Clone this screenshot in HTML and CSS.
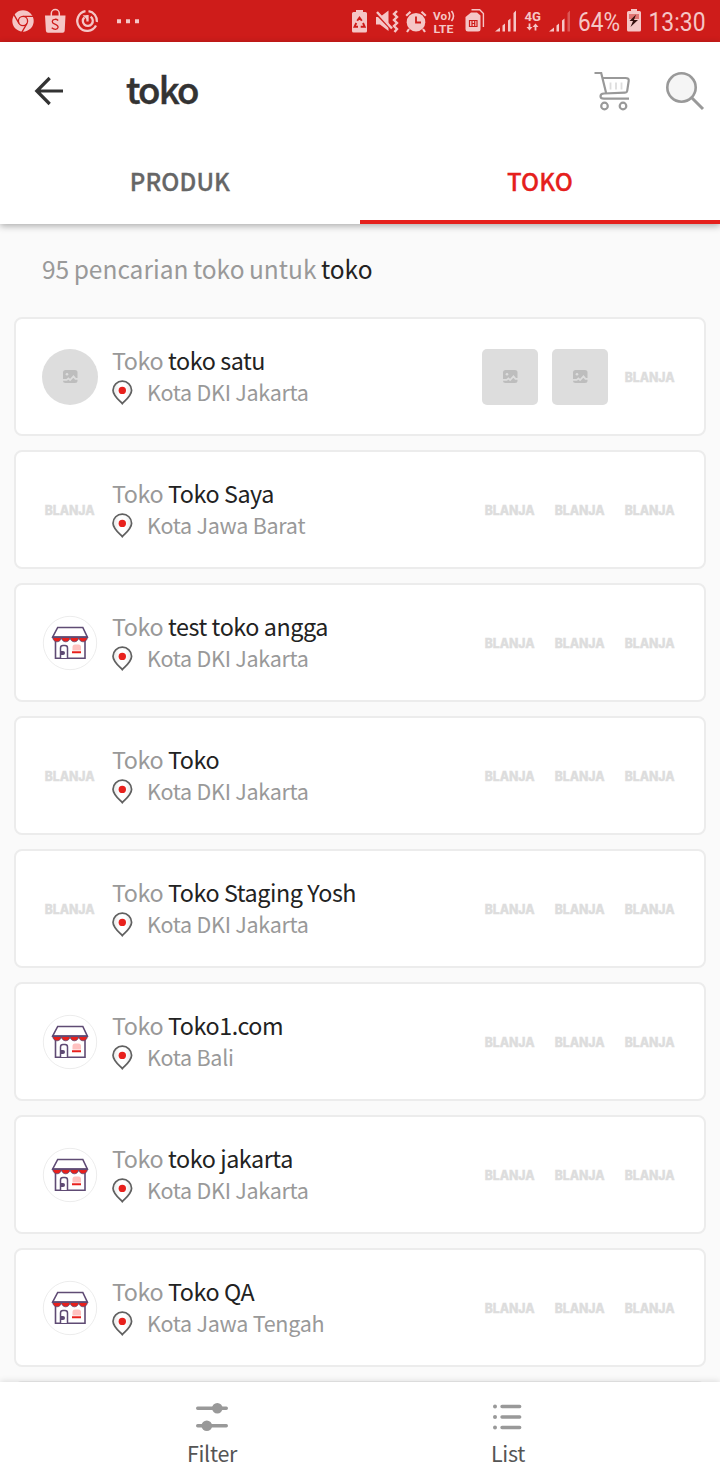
FILE: index.html
```html
<!DOCTYPE html>
<html lang="id">
<head>
<meta charset="utf-8">
<title>toko</title>
<link rel="stylesheet" href="styles.css">
</head>
<body>
<svg class="defs" width="0" height="0" aria-hidden="true">
  <defs>
    <linearGradient id="pinfill" x1="0" x2="1" y1="0" y2="0"><stop offset="0" stop-color="#e6e6e6"/><stop offset=".35" stop-color="#fff"/><stop offset=".65" stop-color="#fff"/><stop offset="1" stop-color="#e6e6e6"/></linearGradient>
    <symbol id="pin" viewBox="0 0 21 25">
      <path d="M10.3 23.6C8 20.9 1 15.800 1 10.200A9.300 9.100 0 0 1 19.600 10.200C19.600 15.800 12.600 20.900 10.300 23.600Z" fill="url(#pinfill)" stroke="#606060" stroke-width="1.700"/>
      <circle cx="10.300" cy="10.400" r="3.700" fill="#e8201c"/>
    </symbol>
    <symbol id="brand" viewBox="0 0 56 56">
      <text x="2.700" y="33" textLength="50" lengthAdjust="spacingAndGlyphs" class="brand-text">BLANJA</text>
    </symbol>
    <symbol id="image" viewBox="0 0 56 56">
      <rect x="21" y="21" width="14.500" height="13" rx="2.500" fill="#bdbdbd"/>
      <circle cx="25" cy="25.300" r="1.300" fill="#ddd"/>
      <path d="M20.500 30.800h4.200l1.700-1.500 1.700 1.700 3.400-3.600 2 2.400h2.500" fill="none" stroke="#ddd" stroke-width="1.700"/>
    </symbol>
    <symbol id="store" viewBox="0 0 56 56">
      <circle cx="28" cy="28" r="26.700" fill="#fff" stroke="#ececec"/>
      <path d="M13.500 24v19.300h29.500V24" fill="#fff" stroke="#5f4b74" stroke-width="1.600"/>
      <path d="M15.700 12.500h25.100l4.500 9.500H10.700z" fill="#fff" stroke="#5f4b74" stroke-width="1.600"/>
      <path d="M10.700 22.300h34.700a4.330 4.500 0 0 1-8.670 0a4.330 4.500 0 0 1-8.680 0a4.330 4.500 0 0 1-8.680 0a4.330 4.500 0 0 1-8.670 0z" fill="#e8201c" stroke="#5f4b74" stroke-width=".8"/>
      <path d="M10 22.300h36" stroke="#5f4b74" stroke-width="1.500"/>
      <path d="M18.500 43V33a2.500 2.500 0 0 1 2.500-2.500h2a2.500 2.500 0 0 1 2.500 2.500v10" fill="#fff" stroke="#5f4b74" stroke-width="1.500"/>
      <path d="M19 36h2a1.800 1.800 0 0 1 0 4h-2z" fill="#5f4b74"/>
      <path d="M30.500 35.500V32a2.500 2.500 0 0 1 2.500-2.500h3.500a2.500 2.500 0 0 1 2.500 2.500v3.500z" fill="#ffc2c0"/>
      <path d="M30 37.300h9" stroke="#e8201c" stroke-width="2"/>
    </symbol>
  </defs>
</svg>
<div class="screen">
  <div class="status">
    <svg width="28" height="42" viewBox="12 0 28 42">
      <circle cx="23" cy="21" r="10.700" class="on"/>
      <g fill="none" stroke="#ce1c1a" stroke-width="1.300"><circle cx="23" cy="21" r="4.600"/><path d="M23 16.400h10M19 23.300l-5.200-9M27 23.300l-5.200 9"/></g>
    </svg>
    <svg width="32" height="42" viewBox="40 0 32 42">
      <path d="M45 15.500h20.500l-.8 15.200q-.1 2-2 2H48q-2 0-2.100-2z" class="on"/>
      <path d="M51.300 16v-2.500a4 4 0 0 1 8 0V16" class="line" stroke-width="1.500"/>
      <path d="M58.200 20.500q-1.500-1.500-3.500-1.200c-3 .3-3.300 3.500-.4 4.600 2.500.9 4.300 1.600 3.700 3.800-.6 2.200-4 2-6.300 0" fill="none" stroke="#ce1c1a" stroke-width="1.300"/>
    </svg>
    <svg width="34" height="42" viewBox="72 0 34 42">
      <g class="line" stroke-width="2.300"><path d="M88.500 11.100A9.900 9.900 0 0 1 96.900 22M96 25.500A9.900 9.900 0 1 1 85.500 11.200"/><path d="M90.600 16.800a5 5 0 1 1-6.200.5M87.500 15v6.500"/></g>
      <path d="M82.700 15.200h4.700V20z" class="on"/>
    </svg>
    <svg width="40" height="42" viewBox="106 0 40 42"><path d="M117 19.200h4v4h-4zM126 19.200h4v4h-4zM135 19.200h4v4h-4z" class="on"/></svg>
    <span class="spacer"></span>
    <svg width="22" height="42" viewBox="350 0 22 42">
      <path d="M356 10h7v2h2.500q1.500 0 1.500 1.500v17.500q0 1.500-1.500 1.500h-12q-1.500 0-1.500-1.500V13.500q0-1.500 1.500-1.500h2.500z" class="on"/>
      <path d="M357.200 20.800l2.300-3.100 2.300 3.100M363 23l1.700 3.700h-4M358 26.700h-3.500l1.800-3.700" fill="none" stroke="#ce1c1a" stroke-width="1.900"/>
    </svg>
    <svg width="30" height="42" viewBox="372 0 30 42">
      <path d="M376 17h4l8.500-6.500v20.500l-8.500-6.500h-4z" class="on"/>
      <path d="M376 13.500l16.500 17" stroke="#ce1c1a" stroke-width="2"/><path d="M377 12l15 16.500" class="line" stroke-width="2.400"/>
      <path d="M397 11l-3 3 3 3-3 3 3 3-3 3 3 3-2.500 3" class="line" stroke-width="2.400"/>
    </svg>
    <svg width="28" height="42" viewBox="402 0 28 42">
      <circle cx="416" cy="22.200" r="9.300" class="on"/><path d="M406.200 15.800l4.300-4M425.800 15.800l-4.300-4M409 29l-2 3M423 29l2 3" class="line" stroke-width="2.200"/><path d="M416 16.500v6h5" fill="none" stroke="#ce1c1a" stroke-width="1.800"/>
    </svg>
    <svg width="30" height="42" viewBox="430 0 30 42">
      <text x="433" y="19.500" class="volte" textLength="14" lengthAdjust="spacingAndGlyphs">Vo</text><path d="M448.500 12q2.500 4 0 8M451.500 11q4 5 0 10" class="line" stroke-width="1.600"/><text x="433.500" y="32.500" class="volte" textLength="20" lengthAdjust="spacingAndGlyphs">LTE</text>
    </svg>
    <svg width="32" height="42" viewBox="460 0 32 42">
      <path d="M471 12.500h6l3.500 3V29q0 2.500-2.500 2.500H468q-2.500 0-2.500-2.500V17z" class="on"/><path d="M471.500 9.800h8.200l3.700 3.700v13.500" class="line" stroke-width="1.400"/><path d="M469.500 20.500h7.500v6h-7.500zM472 20v7M474.700 20v7M472 23.500h3" fill="none" stroke="#ce1c1a" stroke-width="1.200"/>
    </svg>
    <svg width="28" height="42" viewBox="492 0 28 42"><path d="M495 31.500l5-4v4zM502.500 25.500l2.500-2v8h-2.500zM508 20.500l2.500-2v13H508zM513.500 13l2.500-2.500v21h-2.500z" class="on"/></svg>
    <svg width="26" height="42" viewBox="520 0 26 42">
      <text x="524.500" y="20.500" class="tiny" textLength="16.500" lengthAdjust="spacingAndGlyphs">4G</text><path d="M529.500 23.500v4M535.500 30.500v-4" class="line" stroke-width="1.800"/><path d="M526.500 27h6l-3 3.500zM532.500 27h6l-3-3.500z" class="on"/>
    </svg>
    <svg width="28" height="42" viewBox="546 0 28 42"><path d="M549 31.500l5-4v4zM556.500 25.500l2.500-2v8h-2.500zM562 20.500l2.500-2v13H562z" class="on"/><path d="M567.500 13l2.500-2.500v21h-2.500z" class="on" opacity=".35"/></svg>
    <svg width="50" height="42" viewBox="574 0 50 42"><text x="578" y="31" class="clock" textLength="42" lengthAdjust="spacingAndGlyphs">64%</text></svg>
    <svg width="20" height="42" viewBox="624 0 20 42">
      <path d="M631 9h6v2h2.500q1.500 0 1.500 1.500v17.500q0 1.500-1.500 1.500h-11q-1.500 0-1.500-1.500V12.500q0-1.500 1.500-1.500h2.500z" class="on"/><path d="M629 14h10v5h-10z" fill="#e07573"/><path d="M636 14.500l-6.500 6.500h3.500l-2.500 6 7.500-7h-4z" fill="#35100f"/>
    </svg>
    <svg width="62" height="42" viewBox="644 0 62 42"><text x="648.500" y="31" class="clock" textLength="57" lengthAdjust="spacingAndGlyphs">13:30</text></svg>
  </div>

  <header class="top">
    <div class="bar">
      <svg class="back" width="30" height="30" viewBox="0 0 30 30"><path d="M15.700 2L2.800 15l12.900 13M3.500 15H29" fill="none" stroke="#333" stroke-width="3.200"/></svg>
      <h1 class="title">toko</h1>
      <svg class="cart" width="38" height="40" viewBox="0 0 38 40">
        <g fill="none" stroke="#999" stroke-width="2.200"><path d="M.5 2h6.700l4.800 19.500M9.200 7h22.300q3.500 0 3.200 2.800l-1.500 10q-.3 1.800-2.200 1.900L10 22.500q-3.500.2-3.500 2.700 0 2.500 3.500 2.500h25"/><circle cx="10.500" cy="35" r="3.300"/><circle cx="29" cy="35" r="3.300"/></g>
        <path d="M16.500 11.500v7M22 11.500v7M27.500 11.500v7" stroke="#ddd" stroke-width="1.800"/>
      </svg>
      <svg class="search" width="40" height="40" viewBox="0 0 40 40"><circle cx="16.500" cy="16.500" r="14.200" fill="#f5f5f5" stroke="#999" stroke-width="2.600"/><path d="M27 27l11 11" stroke="#999" stroke-width="3"/></svg>
    </div>
    <nav class="tabs"><a class="tab">PRODUK</a><a class="tab active">TOKO</a></nav>
  </header>

  <main class="results">
    <p class="summary">95 pencarian toko untuk <b>toko</b></p>
    <div class="cards">
      <article class="card">
        <div class="avatar blank"><svg><use href="#image"/></svg></div>
        <div class="info"><div class="name">Toko <b>toko satu</b></div><div class="city"><svg class="pin"><use href="#pin"/></svg><span>Kota DKI Jakarta</span></div></div>
        <div class="thumb blank"><svg><use href="#image"/></svg></div><div class="thumb blank"><svg><use href="#image"/></svg></div><div class="thumb"><svg><use href="#brand"/></svg></div>
      </article>
      <article class="card">
        <div class="avatar"><svg><use href="#brand"/></svg></div>
        <div class="info"><div class="name">Toko <b>Toko Saya</b></div><div class="city"><svg class="pin"><use href="#pin"/></svg><span>Kota Jawa Barat</span></div></div>
        <div class="thumb"><svg><use href="#brand"/></svg></div><div class="thumb"><svg><use href="#brand"/></svg></div><div class="thumb"><svg><use href="#brand"/></svg></div>
      </article>
      <article class="card">
        <div class="avatar"><svg><use href="#store"/></svg></div>
        <div class="info"><div class="name">Toko <b>test toko angga</b></div><div class="city"><svg class="pin"><use href="#pin"/></svg><span>Kota DKI Jakarta</span></div></div>
        <div class="thumb"><svg><use href="#brand"/></svg></div><div class="thumb"><svg><use href="#brand"/></svg></div><div class="thumb"><svg><use href="#brand"/></svg></div>
      </article>
      <article class="card">
        <div class="avatar"><svg><use href="#brand"/></svg></div>
        <div class="info"><div class="name">Toko <b>Toko</b></div><div class="city"><svg class="pin"><use href="#pin"/></svg><span>Kota DKI Jakarta</span></div></div>
        <div class="thumb"><svg><use href="#brand"/></svg></div><div class="thumb"><svg><use href="#brand"/></svg></div><div class="thumb"><svg><use href="#brand"/></svg></div>
      </article>
      <article class="card">
        <div class="avatar"><svg><use href="#brand"/></svg></div>
        <div class="info"><div class="name">Toko <b>Toko Staging Yosh</b></div><div class="city"><svg class="pin"><use href="#pin"/></svg><span>Kota DKI Jakarta</span></div></div>
        <div class="thumb"><svg><use href="#brand"/></svg></div><div class="thumb"><svg><use href="#brand"/></svg></div><div class="thumb"><svg><use href="#brand"/></svg></div>
      </article>
      <article class="card">
        <div class="avatar"><svg><use href="#store"/></svg></div>
        <div class="info"><div class="name">Toko <b>Toko1.com</b></div><div class="city"><svg class="pin"><use href="#pin"/></svg><span>Kota Bali</span></div></div>
        <div class="thumb"><svg><use href="#brand"/></svg></div><div class="thumb"><svg><use href="#brand"/></svg></div><div class="thumb"><svg><use href="#brand"/></svg></div>
      </article>
      <article class="card">
        <div class="avatar"><svg><use href="#store"/></svg></div>
        <div class="info"><div class="name">Toko <b>toko jakarta</b></div><div class="city"><svg class="pin"><use href="#pin"/></svg><span>Kota DKI Jakarta</span></div></div>
        <div class="thumb"><svg><use href="#brand"/></svg></div><div class="thumb"><svg><use href="#brand"/></svg></div><div class="thumb"><svg><use href="#brand"/></svg></div>
      </article>
      <article class="card">
        <div class="avatar"><svg><use href="#store"/></svg></div>
        <div class="info"><div class="name">Toko <b>Toko QA</b></div><div class="city"><svg class="pin"><use href="#pin"/></svg><span>Kota Jawa Tengah</span></div></div>
        <div class="thumb"><svg><use href="#brand"/></svg></div><div class="thumb"><svg><use href="#brand"/></svg></div><div class="thumb"><svg><use href="#brand"/></svg></div>
      </article>
      <article class="card"></article>
    </div>
  </main>

  <footer class="bottom">
    <a class="action"><svg width="34" height="34" viewBox="0 0 34 34"><path d="M2.700 9.200h28.600M2.700 26.700h28.600" stroke="#999" stroke-width="3.400" stroke-linecap="round"/><circle cx="22.300" cy="9.300" r="5.300" fill="#999"/><circle cx="11.800" cy="26.700" r="5.300" fill="#999"/></svg><span>Filter</span></a>
    <a class="action"><svg width="34" height="34" viewBox="0 0 34 34"><path d="M11 7.500h17.700M11 18h17.700M11 28.500h17.700" stroke="#999" stroke-width="3.400" stroke-linecap="round"/><g fill="#999"><circle cx="4" cy="7.500" r="2"/><circle cx="4" cy="18" r="2"/><circle cx="4" cy="28.500" r="2"/></g></svg><span>List</span></a>
  </footer>
</div>
</body>
</html>
```
FILE: styles.css
```css
* { box-sizing: border-box; }
body { margin: 0; font-family: "Noto Sans CJK SC", "Noto Sans", sans-serif; background: #fafafa; }
svg { display: block; flex: none; }
.defs { position: absolute; }
.screen { width: 720px; height: 1480px; display: flex; flex-direction: column; overflow: hidden; }

.status { flex: none; height: 42px; background: #ce1c1a; display: flex; padding: 0 14px 0 12px; }
.status svg { overflow: visible; }
.spacer { flex: 1; }
.on { fill: #f5c6c6; }
.line { fill: none; stroke: #f5c6c6; }
.tiny { font: 700 12.5px Roboto, sans-serif; fill: #f5c6c6; }
.volte { font: 700 11.5px Roboto, sans-serif; fill: #f5c6c6; }
.clock { font: 400 26px Roboto, sans-serif; fill: #f5c6c6; }

.top { flex: none; height: 182px; background: #fff; box-shadow: 0 2px 7px rgba(0, 0, 0, .32); z-index: 1; }
.bar { height: 98px; display: flex; align-items: center; padding: 0 15px 0 34px; }
.title { flex: 1; margin: 0 0 4px 62px; font-size: 36.5px; font-weight: 500; line-height: 54px; color: #333; letter-spacing: -1.8px; -webkit-text-stroke: .5px #333; }
.cart { margin-right: 33px; }
.tabs { display: flex; height: 84px; }
.tab { flex: 1; text-align: center; font-size: 24px; font-weight: 500; line-height: 81px; color: #666; border-bottom: 4px solid transparent; height: 84px; letter-spacing: .1px; -webkit-text-stroke: .3px; }
.active { color: #e5201c; border-color: #e5201c; }

.results { flex: 1; min-height: 0; overflow: hidden; background: #fafafa; }
.summary { margin: 0; padding: 26px 42px 0; height: 93px; font-size: 24.5px; line-height: 38px; color: #999; white-space: nowrap; word-spacing: -1px; }
.summary b, .name b { font-weight: 400; color: #222; }
.cards { display: flex; flex-direction: column; gap: 14px; padding: 0 14px; }
.card { height: 119px; border: 2px solid #ececec; border-radius: 8px; background: #fff; padding: 25px 26px 0; display: flex; }
.avatar, .thumb { flex: none; width: 56px; height: 56px; margin-top: 5px; overflow: hidden; }
.avatar svg, .thumb svg { width: 56px; height: 56px; }
.avatar { border-radius: 50%; }
.thumb { border-radius: 5px; margin-left: 14px; }
.blank { background: #ddd; }
.brand-text { font: 800 12.5px Inter, sans-serif; fill: #ddd; stroke: #ddd; stroke-width: .35px; }
.info { flex: 1; padding-left: 14px; white-space: nowrap; }
.name { font-size: 23.3px; line-height: 32px; margin-bottom: 1px; color: #999; letter-spacing: -.42px; }
.city { display: flex; font-size: 21.5px; line-height: 30px; color: #999; letter-spacing: -.27px; }
.pin { width: 21px; height: 25px; margin: 3px 14px 0 0; }

.bottom { flex: none; height: 98px; background: #fff; display: flex; padding: 17px 64px 0; box-shadow: 0 -1px 6px rgba(0, 0, 0, .12); z-index: 1; }
.action { flex: 1; display: flex; flex-direction: column; align-items: center; font-size: 21.5px; line-height: 40px; color: #555; letter-spacing: -.3px; }
```
